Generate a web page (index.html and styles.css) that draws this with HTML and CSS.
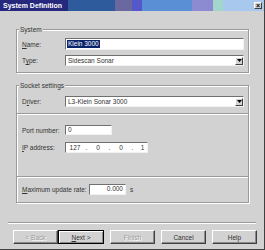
FILE: index.html
```html
<!DOCTYPE html>
<html>
<head>
<meta charset="utf-8">
<link rel="stylesheet" href="styles.css">
</head>
<body>
<div class="win">
  <div class="title">
    <span class="ttext">System Definition</span>
    <span class="close">×</span>
  </div>
  <div class="content">
    <div class="group sys">
      <div class="legend">System</div>
      <div class="rows">
        <div class="row">
          <span class="lbl"><u>N</u>ame:</span>
          <div class="field edit"><span class="sel">Klein 3000</span></div>
        </div>
        <div class="row">
          <span class="lbl">T<u>y</u>pe:</span>
          <div class="field combo"><span class="val">Sidescan Sonar</span><span class="drop"><svg width="5" height="3" viewBox="0 0 5 3"><path d="M0 0h5L2.5 3z" fill="#000"/></svg></span></div>
        </div>
      </div>
    </div>
    <div class="group sock">
      <div class="legend">Socket settings</div>
      <div class="sect s1">
        <div class="row">
          <span class="lbl">D<u>r</u>iver:</span>
          <div class="field combo"><span class="val">L3-Klein Sonar 3000</span><span class="drop"><svg width="5" height="3" viewBox="0 0 5 3"><path d="M0 0h5L2.5 3z" fill="#000"/></svg></span></div>
        </div>
      </div>
      <div class="sect s2">
        <div class="row">
          <span class="lbl">Port number:</span>
          <div class="field port">0</div>
        </div>
        <div class="row">
          <span class="lbl"><u>I</u>P address:</span>
          <div class="field ip">
            <span>127</span><span class="dot">.</span><span>0</span><span class="dot">.</span><span>0</span><span class="dot">.</span><span>1</span>
          </div>
        </div>
      </div>
      <div class="sect s3">
        <div class="row">
          <span class="lbl wide"><u>M</u>aximum update rate:</span>
          <div class="field rate">0.000</div>
          <span class="unit">s</span>
        </div>
      </div>
    </div>
  </div>
  <div class="bsep"></div>
  <div class="buttons">
    <button class="btn dis">&lt; Back</button>
    <button class="btn def"><u>N</u>ext &gt;</button>
    <button class="btn dis">Finish</button>
    <button class="btn">Cancel</button>
    <button class="btn">Help</button>
  </div>
</div>
</body>
</html>
```

FILE: styles.css
```css
html, body {
  margin: 0;
  padding: 0;
  background: #d2d2d2;
}

.win {
  width: 265px;
  height: 250px;
  box-sizing: border-box;
  background: #d2d2d2;
  border-right: 1px solid #404040;
  border-bottom: 1px solid #404040;
  font: 6.5px "Liberation Sans", Arial, sans-serif;
  color: #333;
  overflow: hidden;
}

.title {
  height: 11px;
  display: flex;
  align-items: center;
  justify-content: space-between;
  padding: 0 2px 0 3px;
  background: linear-gradient(to right,
    #25287c 0 68px,
    #2e5b9b 68px 115px,
    #6a689e 115px 132px,
    #5757cc 132px 142px,
    #5a8fd6 142px 192px,
    #8c8ad0 192px 213px,
    #a2d6cc 213px 223px,
    #a8c8ee 223px);
}

.ttext {
  color: #fff;
  font-weight: bold;
  font-size: 7px;
  line-height: 9px;
}

.close {
  width: 8px;
  height: 7px;
  box-sizing: border-box;
  background: #d2d2d2;
  border: 1px solid;
  border-color: #fff #404040 #404040 #fff;
  font-size: 7px;
  font-weight: bold;
  line-height: 5px;
  text-align: center;
  color: #000;
}

.content {
  padding: 18px 15px 0 16px;
}

.group {
  border: 1px solid #9a9a9a;
  box-shadow: 1px 1px 0 #fff, inset 1px 1px 0 #fff;
}

.sock {
  margin-top: 12px;
}

.legend {
  width: fit-content;
  margin: -5px 0 0 2px;
  padding: 0 1px;
  line-height: 9px;
  background: #d2d2d2;
}

.rows {
  display: flex;
  flex-direction: column;
  gap: 5px;
  padding: 4px 4px 6px 5px;
}

.row {
  display: flex;
  align-items: center;
}

.lbl {
  width: 43px;
  flex: none;
  white-space: nowrap;
}

.lbl.wide {
  width: 67px;
}

.field {
  box-sizing: border-box;
  background: #fff;
  border: 1px solid;
  border-color: #707070 #f2f2f2 #f2f2f2 #707070;
  line-height: 8px;
  color: #333;
}

.edit {
  flex: 1;
  height: 12px;
  display: flex;
  align-items: center;
  padding-left: 1px;
}

.sel {
  background: #0a246a;
  color: #fff;
  line-height: 8px;
  padding: 0 1px;
}

.combo {
  flex: 1;
  height: 11px;
  display: flex;
  align-items: center;
  padding-left: 2px;
}

.val {
  flex: 1;
}

.drop {
  width: 8px;
  height: 8px;
  box-sizing: border-box;
  background: #d2d2d2;
  border: 1px solid;
  border-color: #fff #404040 #404040 #fff;
  display: flex;
  align-items: center;
  justify-content: center;
}

.sect {
  padding-left: 5px;
  padding-right: 4px;
}

.s1 {
  padding-top: 6px;
  padding-bottom: 6px;
  border-bottom: 1px solid #9a9a9a;
  box-shadow: 0 1px 0 #fff;
}

.s2 {
  display: flex;
  flex-direction: column;
  gap: 7px;
  padding-top: 11px;
  padding-bottom: 23px;
  border-bottom: 1px solid #9a9a9a;
  box-shadow: 0 1px 0 #fff;
}

.s3 {
  padding-top: 7px;
  padding-bottom: 7px;
}

.port {
  width: 47px;
  height: 10px;
  padding-left: 2px;
}

.ip {
  width: 83px;
  height: 11px;
  padding-left: 1px;
  display: grid;
  grid-template-columns: 16px 7px 16px 7px 16px 7px 13px;
  align-items: center;
  text-align: center;
  overflow: hidden;
}

.rate {
  width: 37px;
  height: 11px;
  text-align: right;
  padding-right: 2px;
}

.unit {
  margin-left: 4px;
}

.bsep {
  margin: 19px 8px 0 8px;
  border-top: 1px solid #9a9a9a;
  border-bottom: 1px solid #fff;
}

.buttons {
  display: flex;
  gap: 6px;
  padding: 6px 0 0 13px;
}

.btn {
  width: 45px;
  height: 14px;
  box-sizing: border-box;
  margin: 0;
  padding: 0;
  font: 6.5px "Liberation Sans", Arial, sans-serif;
  color: #333;
  background: #d2d2d2;
  border: 1px solid;
  border-color: #fff #404040 #404040 #fff;
  box-shadow: inset -1px -1px 0 #8a8a8a;
}

.btn.dis {
  color: #9a9a9a;
  text-shadow: 1px 1px 0 #fff;
}

.btn.def {
  margin-left: -6px;
  width: 46px;
  border-color: #000;
  box-shadow: inset 1px 1px 0 #fff, inset -1px -1px 0 #8a8a8a;
}
```
